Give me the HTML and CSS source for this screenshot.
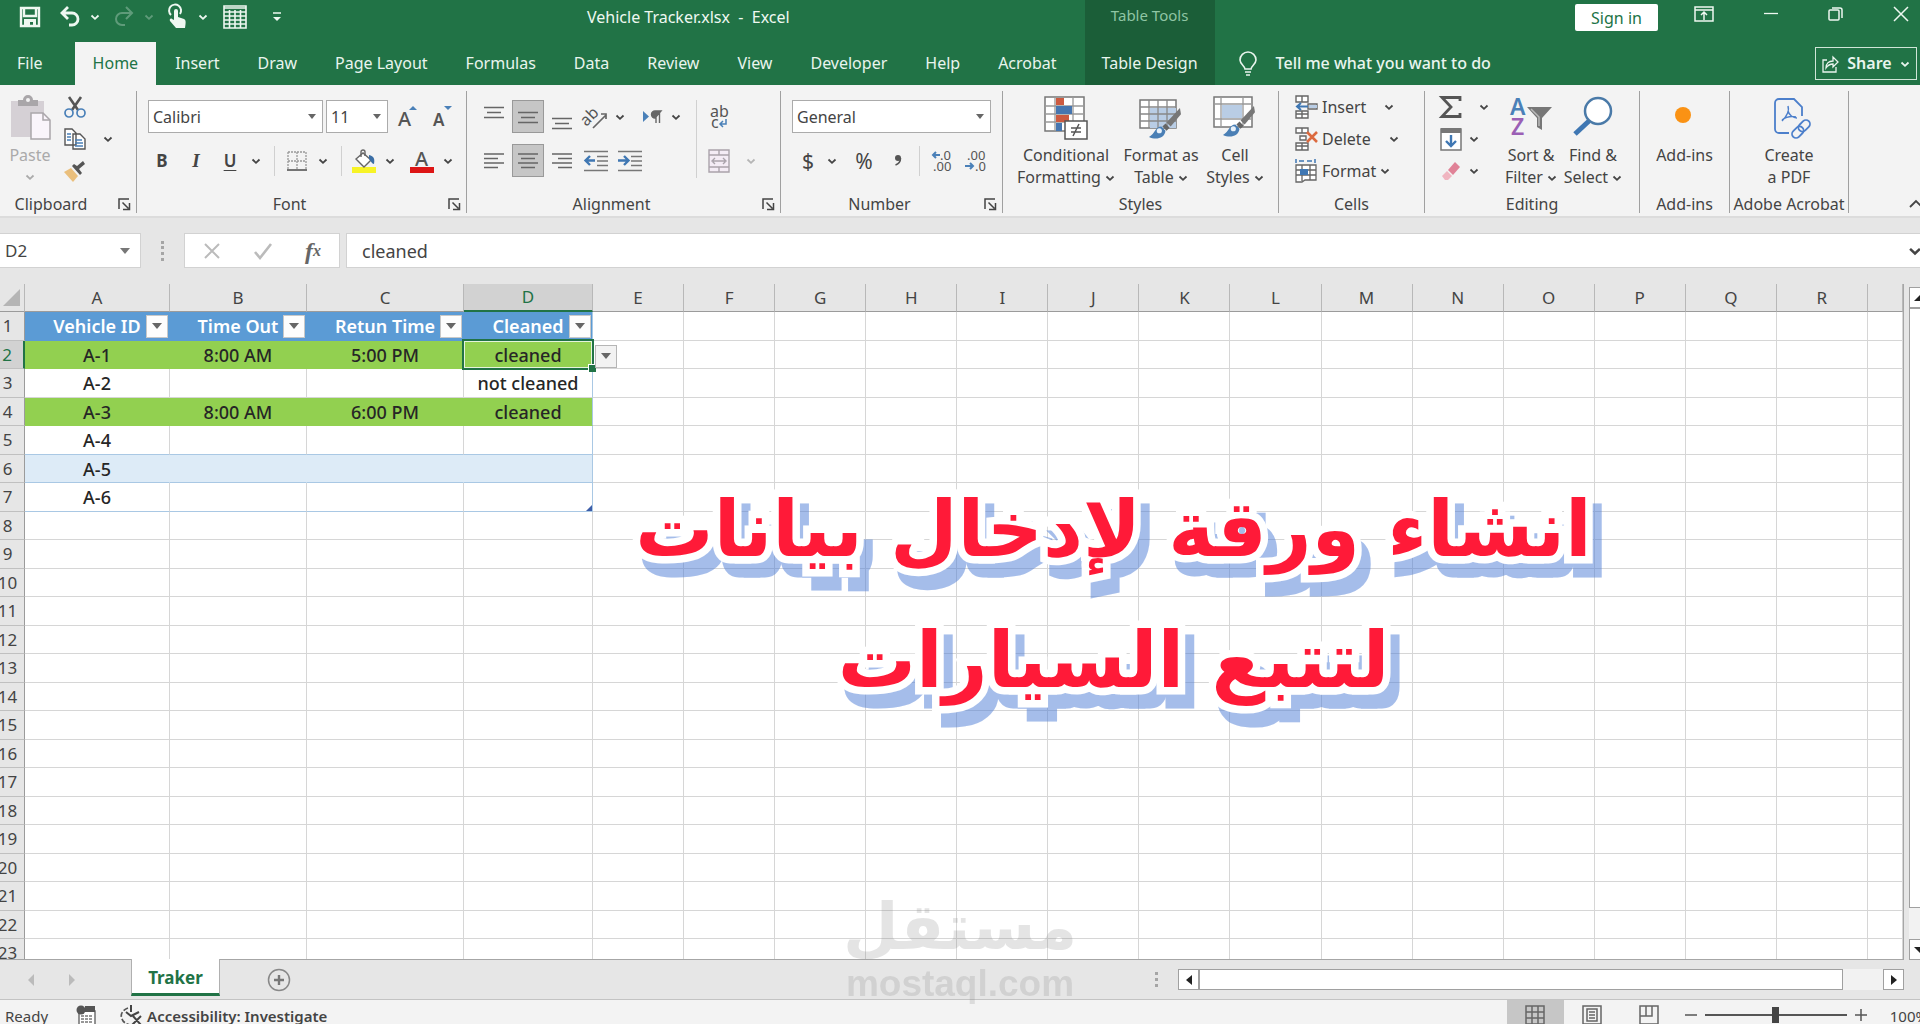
FILE: index.html
```html
<!DOCTYPE html>
<html lang="en">
<head>
    <meta charset="UTF-8">
    <meta name="viewport" content="width=device-width, initial-scale=1.0">
    <title>Vehicle Tracker.xlsx - Excel</title>
    <link rel="stylesheet" href="styles.css">
</head>
<body>
    <!-- shared small icons -->
    <svg class="sprite" aria-hidden="true">
        <symbol id="chev" viewBox="0 0 10 10"><path d="M1.5 3.5 5 6.8 8.5 3.5" fill="none" stroke="currentColor" stroke-width="1.8"/></symbol>
        <symbol id="launch" viewBox="0 0 13 13"><path d="M1 11V1h10M4.5 4.5l6 6M11.5 5v6.5H5" fill="none" stroke="currentColor" stroke-width="1.5"/></symbol>
        <symbol id="brush" viewBox="0 0 32 32"><path d="M30 1 17 15l4 4L31 7z" fill="#777"/><path d="m16 16-3 3 4 4 3-3z" fill="#666"/><path d="M12 19c-6 0-6 7-12 10 6 3 15 2 16-6z" fill="#4a7fb5"/><circle cx="10" cy="23" r="2.5" fill="#e8f1fa"/></symbol>
    </svg>

    <header class="titlebar">
        <div class="quick">
            <button type="button" aria-label="Save"><svg width="22" height="22" viewBox="0 0 22 22"><path d="M2 2h18v18H2zM5 2v8h12V2" fill="none" stroke="currentColor" stroke-width="2.4"/><path d="M5 13h12v7h-3v-4h-3v4H5z" fill="currentColor"/></svg></button>
            <button type="button" aria-label="Undo"><svg width="22" height="22" viewBox="0 0 22 22"><path d="M9 1 3 7l6 6M3 7h10a5.5 5.5 0 0 1 0 12h-3" fill="none" stroke="currentColor" stroke-width="2.8"/></svg></button>
            <button type="button" class="drop" aria-label="Undo list"><svg width="10" height="10"><use href="#chev"/></svg></button>
            <button type="button" class="off" aria-label="Redo"><svg width="22" height="22" viewBox="0 0 22 22"><path d="m13 1 6 6-6 6M19 7H9a5.5 5.5 0 0 0 0 12h3" fill="none" stroke="currentColor" stroke-width="2"/></svg></button>
            <button type="button" class="drop off" aria-label="Redo list"><svg width="10" height="10"><use href="#chev"/></svg></button>
            <button type="button" aria-label="Touch mode"><svg width="20" height="24" viewBox="0 0 20 24"><path d="M3 10a6 6 0 1 1 9-1" fill="none" stroke="currentColor" stroke-width="2"/><path d="M6 6a2 2 0 0 1 4 0v6l6 2c2 1 2 3 1 9H8l-6-7c-1-2 1-3 2-2l2 1z" fill="currentColor"/></svg></button>
            <button type="button" class="drop" aria-label="Touch mode list"><svg width="10" height="10"><use href="#chev"/></svg></button>
            <button type="button" class="qtable" aria-label="Table"><svg width="24" height="24" viewBox="0 0 24 24"><path d="M1 1h22v22H1zM1 7h22M1 11h22M1 15h22M1 19h22M6.5 5v18M12 5v18M17.5 5v18M1 3h22" fill="none" stroke="currentColor" stroke-width="1.6"/></svg></button>
            <button type="button" class="qmore" aria-label="Customize"><svg width="10" height="12" viewBox="0 0 10 12"><path d="M1 2h8" stroke="currentColor" stroke-width="1.5"/><path d="M1 6h8L5 10z" fill="currentColor"/></svg></button>
        </div>
        <div class="doc-title">Vehicle Tracker.xlsx&nbsp; -&nbsp; Excel</div>
        <div class="window-buttons">
            <button type="button" class="signin">Sign in</button>
            <button type="button" aria-label="Ribbon display options"><svg width="20" height="16" viewBox="0 0 20 16"><path d="M1 1h18v14H1zM1 4h18M10 14V6M7 9l3-3 3 3" fill="none" stroke="currentColor" stroke-width="1.5"/></svg></button>
            <button type="button" aria-label="Minimize"><svg width="16" height="16" viewBox="0 0 16 16"><path d="M1 7.5h14" stroke="currentColor" stroke-width="1.3"/></svg></button>
            <button type="button" aria-label="Restore"><svg width="16" height="16" viewBox="0 0 16 16"><path d="M1 5a1 1 0 0 1 1-1h8a1 1 0 0 1 1 1v8a1 1 0 0 1-1 1H2a1 1 0 0 1-1-1zM4 2h8a2 2 0 0 1 2 2v8" fill="none" stroke="currentColor" stroke-width="1.5"/></svg></button>
            <button type="button" aria-label="Close"><svg width="16" height="16" viewBox="0 0 16 16"><path d="m1 1 14 14M15 1 1 15" stroke="currentColor" stroke-width="1.5"/></svg></button>
        </div>
    </header>

    <nav class="tabs">
        <a href="#" class="file">File</a>
        <a href="#" class="active">Home</a>
        <a href="#">Insert</a>
        <a href="#">Draw</a>
        <a href="#">Page Layout</a>
        <a href="#">Formulas</a>
        <a href="#">Data</a>
        <a href="#">Review</a>
        <a href="#">View</a>
        <a href="#">Developer</a>
        <a href="#">Help</a>
        <a href="#">Acrobat</a>
        <div class="context">
            <span>Table Tools</span>
            <a href="#">Table Design</a>
        </div>
        <button type="button" class="tellme"><svg width="18" height="24" viewBox="0 0 18 24"><path d="M6 17c0-3-5-5-5-9a8 8 0 0 1 16 0c0 4-5 6-5 9zM6 20h6M7 23h4" fill="none" stroke="currentColor" stroke-width="1.6"/></svg>Tell me what you want to do</button>
        <button type="button" class="share"><svg width="17" height="18" viewBox="0 0 17 18"><path d="M5 5H1v12h13v-5M4 13c0-5 3-7 7-7V2l5 5-5 5V9c-3 0-5 1-7 4z" fill="none" stroke="currentColor" stroke-width="1.3"/></svg>Share<svg width="10" height="10"><use href="#chev"/></svg></button>
    </nav>

    <section class="ribbon">
        <div class="group g-clip">
            <div class="body">
                <button type="button" class="big paste">
                    <svg width="44" height="44" viewBox="0 0 44 44"><path d="M3 5h33v36H3z" fill="#d5d0d5"/><path d="M10 4h5a5 5 0 0 1 10 0h5v6H10z" fill="#a9a6a9"/><circle cx="20" cy="4" r="2" fill="#f3f3f3"/><path d="M23 17h12l7 7v19H23z" fill="#faf5fb" stroke="#aaa6aa" stroke-width="1.5"/><path d="M35 17v7h7" fill="none" stroke="#aaa6aa" stroke-width="1.5"/></svg>
                    <span>Paste</span><svg width="10" height="10"><use href="#chev"/></svg>
                </button>
                <div class="stack">
                    <button type="button" aria-label="Cut"><svg width="24" height="24" viewBox="0 0 24 24"><path d="M6 2l9 13M18 2 9 15" stroke="#555" stroke-width="2.6"/><circle cx="6" cy="18" r="4" fill="none" stroke="#4a80b8" stroke-width="1.7"/><circle cx="18" cy="18" r="4" fill="none" stroke="#4a80b8" stroke-width="1.7"/></svg></button>
                    <div class="line"><button type="button" aria-label="Copy"><svg width="24" height="24" viewBox="0 0 24 24"><path d="M2 2h7l4 4v12H2zM10 7h7l5 5v10H10z" fill="#fff" stroke="#555" stroke-width="1.4"/><path d="M4 7h4M4 10h4M4 13h4M12 13h7M12 16h8M12 19h8" stroke="#4a80b8" stroke-width="1.3"/></svg></button><button type="button" class="drop" aria-label="Copy options"><svg width="10" height="10"><use href="#chev"/></svg></button></div>
                    <button type="button" aria-label="Format Painter"><svg width="24" height="24" viewBox="0 0 24 24"><path d="m1 13 7-4 7 8-5 6z" fill="#eabf7c"/><path d="m9 7 8 9 2-2-3-4 6-5-2-3-6 5-3-2z" fill="#555"/></svg></button>
                </div>
            </div>
            <div class="caption"><span>Clipboard</span><button type="button" aria-label="Clipboard settings"><svg width="13" height="13"><use href="#launch"/></svg></button></div>
        </div>

        <div class="group g-font">
            <div class="body rows">
                <div class="line">
                    <select class="combo face" aria-label="Font"><option>Calibri</option></select>
                    <select class="combo size" aria-label="Font size"><option>11</option></select>
                    <button type="button" class="ico" aria-label="Increase font size"><svg width="18" height="24" viewBox="0 0 18 24"><text x="0" y="21" class="t20">A</text><path d="m11 5 4-4 4 4z" fill="#4a80b8"/></svg></button>
                    <button type="button" class="ico" aria-label="Decrease font size"><svg width="18" height="24" viewBox="0 0 18 24"><text x="1" y="21" class="t17">A</text><path d="m12 1 4 4 4-4z" fill="#4a80b8"/></svg></button>
                </div>
                <div class="line">
                    <button type="button" class="ico fmt"><b>B</b></button>
                    <button type="button" class="ico fmt"><i>I</i></button>
                    <button type="button" class="ico fmt"><u>U</u></button>
                    <button type="button" class="drop" aria-label="Underline options"><svg width="10" height="10"><use href="#chev"/></svg></button>
                    <span class="sep"></span>
                    <button type="button" class="ico" aria-label="Borders"><svg width="20" height="20" viewBox="0 0 20 20"><path d="M1 1h18v18M1 1v18M10 1v18M1 10h18" fill="none" stroke="#999" stroke-width="1.3" stroke-dasharray="2 1"/><path d="M0 19h20" stroke="#666" stroke-width="1.8"/></svg></button>
                    <button type="button" class="drop" aria-label="Border options"><svg width="10" height="10"><use href="#chev"/></svg></button>
                    <span class="sep"></span>
                    <button type="button" class="ico" aria-label="Fill color"><svg width="24" height="24" viewBox="0 0 24 24"><path d="M0 18h24v6H0z" fill="#f7f326"/><path d="m4 10 7-6 8 7-7 7z" fill="#fff" stroke="#666" stroke-width="1.4"/><path d="M9 8V3a2 2 0 0 1 4 0v4" fill="none" stroke="#666" stroke-width="1.4"/><path d="M17 6c5 1 6 4 5 9-2 0-3-3-5-5z" fill="#3b6ea5"/></svg></button>
                    <button type="button" class="drop" aria-label="Fill options"><svg width="10" height="10"><use href="#chev"/></svg></button>
                    <button type="button" class="ico push" aria-label="Font color"><svg width="24" height="24" viewBox="0 0 24 24"><path d="M0 18h24v6H0z" fill="#dd1515"/><text x="5" y="17" class="t20">A</text></svg></button>
                    <button type="button" class="drop" aria-label="Font color options"><svg width="10" height="10"><use href="#chev"/></svg></button>
                </div>
            </div>
            <div class="caption"><span>Font</span><button type="button" aria-label="Font settings"><svg width="13" height="13"><use href="#launch"/></svg></button></div>
        </div>

        <div class="group g-align">
            <div class="body">
                <div class="rows">
                    <div class="line">
                        <button type="button" class="ico" aria-label="Top align"><svg width="20" height="24" viewBox="0 0 20 24"><path d="M0 4.5h20M3 9.5h14M0 14.5h20" transform="translate(0 -2)" stroke="#666" stroke-width="1.5"/></svg></button>
                        <button type="button" class="ico on" aria-label="Middle align"><svg width="20" height="24" viewBox="0 0 20 24"><path d="M0 7.5h20M3 12.5h14M0 17.5h20" stroke="#666" stroke-width="1.5"/></svg></button>
                        <button type="button" class="ico" aria-label="Bottom align"><svg width="20" height="24" viewBox="0 0 20 24"><path d="M0 13.5h20M3 18.5h14M0 23.5h20" stroke="#666" stroke-width="1.5"/></svg></button>
                        <button type="button" class="ico" aria-label="Orientation"><svg width="24" height="24" viewBox="0 0 24 24"><text x="-3" y="15" class="t16" transform="rotate(-45 8 12)">ab</text><path d="M9 23 22 10M17 9h5v5" fill="none" stroke="#666" stroke-width="1.7"/></svg></button>
                        <button type="button" class="drop tight" aria-label="Orientation options"><svg width="10" height="10"><use href="#chev"/></svg></button>
                        <button type="button" class="ico push8" aria-label="Text direction"><svg width="20" height="18" viewBox="0 0 20 18"><path d="M1 3v11l6-5.5z" fill="#4a80b8"/><path d="M14 15V3M17.5 15V3M19 3h-6a3.5 3.5 0 0 0 0 7z" fill="#666" stroke="#666" stroke-width="1.4"/></svg></button>
                        <button type="button" class="drop tight" aria-label="Text direction options"><svg width="10" height="10"><use href="#chev"/></svg></button>
                    </div>
                    <div class="line">
                        <button type="button" class="ico" aria-label="Align left"><svg width="20" height="18" viewBox="0 0 20 18"><path d="M0 2h20M0 6.5h14M0 11h20M0 15.5h14" stroke="#666" stroke-width="1.5"/></svg></button>
                        <button type="button" class="ico on" aria-label="Center"><svg width="20" height="18" viewBox="0 0 20 18"><path d="M0 2h20M3 6.5h14M0 11h20M3 15.5h14" stroke="#666" stroke-width="1.5"/></svg></button>
                        <button type="button" class="ico" aria-label="Align right"><svg width="20" height="18" viewBox="0 0 20 18"><path d="M0 2h20M6 6.5h14M0 11h20M6 15.5h14" stroke="#666" stroke-width="1.5"/></svg></button>
                        <button type="button" class="ico" aria-label="Decrease indent"><svg width="24" height="22" viewBox="0 0 24 22"><path d="M0 1.5h24M13 6.5h11M13 11h11M13 15.5h11M0 20.5h24" stroke="#777" stroke-width="1.5"/><path d="M11 10.5H3M6 6l-4.5 4.5L6 15" fill="none" stroke="#3f77b3" stroke-width="2.4"/></svg></button>
                        <button type="button" class="ico" aria-label="Increase indent"><svg width="24" height="22" viewBox="0 0 24 22"><path d="M0 1.5h24M13 6.5h11M13 11h11M13 15.5h11M0 20.5h24" stroke="#777" stroke-width="1.5"/><path d="M0 10.5h9M6 6l4.5 4.5L6 15" fill="none" stroke="#3f77b3" stroke-width="2.4"/></svg></button>
                    </div>
                </div>
                <span class="sep tall"></span>
                <div class="rows">
                    <div class="line">
                        <button type="button" class="ico" aria-label="Wrap text"><svg width="18" height="26" viewBox="0 0 18 26"><text x="0" y="13" class="t16">ab</text><text x="1" y="24" class="t16">c</text><path d="M16 15v5h-5M13 17l-3 3 3 3" fill="none" stroke="#4a80b8" stroke-width="1.5"/></svg></button>
                    </div>
                    <div class="line">
                        <button type="button" class="ico" aria-label="Merge and center"><svg width="22" height="24" viewBox="0 0 22 24"><path d="M1 1h20v22H1zM1 6h20M1 18h20M11 1v5M11 18v5M5 12h12M7 9l-3 3 3 3M15 9l3 3-3 3" fill="#f4ecf5" stroke="#aaa3ab" stroke-width="1.4"/></svg></button>
                        <button type="button" class="drop faint push" aria-label="Merge options"><svg width="10" height="10"><use href="#chev"/></svg></button>
                    </div>
                </div>
            </div>
            <div class="caption"><span>Alignment</span><button type="button" aria-label="Alignment settings"><svg width="13" height="13"><use href="#launch"/></svg></button></div>
        </div>

        <div class="group g-number">
            <div class="body rows">
                <div class="line"><select class="combo format" aria-label="Number format"><option>General</option></select></div>
                <div class="line">
                    <button type="button" class="ico sym">$</button>
                    <button type="button" class="drop tight" aria-label="Currency options"><svg width="10" height="10"><use href="#chev"/></svg></button>
                    <button type="button" class="ico sym push8">%</button>
                    <button type="button" class="ico sym" aria-label="Comma style"><svg width="8" height="12" viewBox="0 0 8 12"><circle cx="4" cy="3" r="3" fill="#555"/><path d="M6.5 3c0 4-2 6-5 7" fill="none" stroke="#555" stroke-width="1.6"/></svg></button>
                    <span class="sep close"></span>
                    <button type="button" class="ico" aria-label="Increase decimal"><svg width="22" height="22" viewBox="0 0 22 22"><text x="9" y="10" class="t13">.0</text><text x="2" y="21" class="t13">.00</text><path d="M9 5H2M5 2 2 5l3 3" fill="none" stroke="#4a80b8" stroke-width="2"/></svg></button>
                    <button type="button" class="ico" aria-label="Decrease decimal"><svg width="22" height="22" viewBox="0 0 22 22"><text x="2" y="10" class="t13">.00</text><text x="10" y="21" class="t13">.0</text><path d="M0 16h8M5 13l3 3-3 3" fill="none" stroke="#4a80b8" stroke-width="2"/></svg></button>
                </div>
            </div>
            <div class="caption"><span>Number</span><button type="button" aria-label="Number settings"><svg width="13" height="13"><use href="#launch"/></svg></button></div>
        </div>

        <div class="group g-styles">
            <div class="body">
                <button type="button" class="big w102">
                    <svg width="44" height="44" viewBox="0 0 44 44"><path d="M1 1h39v34H1z" fill="#fff" stroke="#777" stroke-width="1.5"/><path d="M1 10h39M1 18h39M1 26h39M11 1v34M29 1v34" stroke="#999" stroke-width="1.3"/><path d="M12 2h8v7h-8zM12 19h13v7H12z" fill="#cc5a40"/><path d="M12 10h16v8H12zM12 27h6v8h-6z" fill="#4676b0"/><path d="M21 25h22v18H21z" fill="#fff" stroke="#555" stroke-width="1.5"/><path d="M27 32h10M27 36h10M35 28l-6 12" stroke="#555" stroke-width="1.5"/></svg>
                    <span>Conditional</span><span>Formatting <svg width="10" height="10"><use href="#chev"/></svg></span>
                </button>
                <button type="button" class="big w82">
                    <svg width="44" height="44" viewBox="0 0 44 44"><path d="M1 4h36v28H1z" fill="#fff" stroke="#777" stroke-width="1.5"/><path d="M11 12h26v20H11z" fill="#b9cde5"/><path d="M1 11h36M1 18h36M1 25h36M10 4v28M19 4v28M28 4v28" stroke="#888" stroke-width="1.3"/><svg x="10" y="11" width="33" height="33"><use href="#brush"/></svg></svg>
                    <span>Format as</span><span>Table <svg width="10" height="10"><use href="#chev"/></svg></span>
                </button>
                <button type="button" class="big w60">
                    <svg width="44" height="44" viewBox="0 0 44 44"><path d="M1 1h38v30H1z" fill="#fff" stroke="#777" stroke-width="1.5"/><path d="M9 9h20v13H9z" fill="#b9cde5"/><path d="M1 8h38M1 23h38M8 1v30M30 1v30" stroke="#999" stroke-width="1.3"/><svg x="10" y="9" width="33" height="33"><use href="#brush"/></svg></svg>
                    <span>Cell</span><span>Styles <svg width="10" height="10"><use href="#chev"/></svg></span>
                </button>
            </div>
            <div class="caption"><span>Styles</span></div>
        </div>

        <div class="group g-cells">
            <div class="body stack">
                <button type="button" class="side"><svg width="23" height="24" viewBox="0 0 23 24"><path d="M1 1h12v6H1zM1 16h12v7H1zM7 1v6M7 16v7M1 19h12M13 9h9v5h-9z" fill="#fff" stroke="#666" stroke-width="1.4"/><path d="M14 10h8v3h-8z" fill="#b9cde5"/><path d="M13 11.5H2M6 8l-4 3.5L6 15" fill="none" stroke="#3f77b3" stroke-width="2"/></svg>Insert<svg class="far" width="10" height="10"><use href="#chev"/></svg></button>
                <button type="button" class="side"><svg width="23" height="24" viewBox="0 0 23 24"><path d="M1 1h12v5H1zM1 16h12v7H1zM7 1v5M7 16v7M1 19h12M5 9h6v4H5z" fill="#fff" stroke="#666" stroke-width="1.4"/><path d="m12 5 10 10M22 5 12 15" stroke="#dc6a3f" stroke-width="2.6"/></svg>Delete<svg class="far" width="10" height="10"><use href="#chev"/></svg></button>
                <button type="button" class="side"><svg width="23" height="24" viewBox="0 0 23 24"><path d="M1 6h20v15H10l-3 2H1zM1 11h20M1 16h20M7 6v16M15 6v15" fill="#fff" stroke="#666" stroke-width="1.3"/><path d="M5 10h8v6H5z" fill="#3f77b3"/><path d="M1 0v4M20 0v4M4 2h5M12 2h5" stroke="#3f77b3" stroke-width="1.5"/></svg>Format<svg width="10" height="10"><use href="#chev"/></svg></button>
            </div>
            <div class="caption"><span>Cells</span></div>
        </div>

        <div class="group g-edit">
            <div class="body">
                <div class="stack">
                    <div class="line wide"><button type="button" aria-label="AutoSum"><svg width="24" height="24" viewBox="0 0 24 24"><path d="M21 6V2.5H3l9 9.500-9 9.500h18V18" fill="none" stroke="#555" stroke-width="2.8"/></svg></button><button type="button" class="drop" aria-label="AutoSum options"><svg width="10" height="10"><use href="#chev"/></svg></button></div>
                    <div class="line"><button type="button" aria-label="Fill"><svg width="24" height="24" viewBox="0 0 24 24"><path d="M2 2h20v21H2z" fill="#fff" stroke="#777" stroke-width="1.5"/><path d="M2 1h20v5H2z" fill="#777"/><path d="M12 8v11M7 14l5 5 5-5" fill="none" stroke="#3f77b3" stroke-width="2.4"/></svg></button><button type="button" class="drop" aria-label="Fill options"><svg width="10" height="10"><use href="#chev"/></svg></button></div>
                    <div class="line"><button type="button" aria-label="Clear"><svg width="24" height="24" viewBox="0 0 24 24"><path d="m9 11 7-8 5 5-7 8z" fill="#e08297"/><path d="m8 12 5 5-4 4H6l-3-4z" fill="#f0b5c0"/></svg></button><button type="button" class="drop" aria-label="Clear options"><svg width="10" height="10"><use href="#chev"/></svg></button></div>
                </div>
                <button type="button" class="big w60">
                    <svg width="44" height="44" viewBox="0 0 44 44"><text x="1" y="19" class="az blue">A</text><text x="2" y="39" class="az purple">Z</text><path d="M18 11h25L33 22v12l-5-3v-9z" fill="#777"/><path d="m22 13 8 8v9" fill="none" stroke="#bbb" stroke-width="1.5"/></svg>
                    <span>Sort &amp;</span><span>Filter <svg width="10" height="10"><use href="#chev"/></svg></span>
                </button>
                <button type="button" class="big w60">
                    <svg width="44" height="44" viewBox="0 0 44 44"><path d="M4 38 18 25" stroke="#3f77b3" stroke-width="5"/><circle cx="27" cy="15" r="13" fill="#fff" stroke="#4a7aa8" stroke-width="2.5"/></svg>
                    <span>Find &amp;</span><span>Select <svg width="10" height="10"><use href="#chev"/></svg></span>
                </button>
            </div>
            <div class="caption"><span>Editing</span></div>
        </div>

        <div class="group g-addins">
            <div class="body">
                <button type="button" class="big"><svg width="44" height="44" viewBox="0 0 44 44"><circle cx="20" cy="19" r="8" fill="#fa9214"/></svg><span>Add-ins</span></button>
            </div>
            <div class="caption"><span>Add-ins</span></div>
        </div>

        <div class="group g-acrobat">
            <div class="body">
                <button type="button" class="big">
                    <svg width="44" height="44" viewBox="0 0 44 44" fill="none" stroke="#4c7fcb" stroke-width="1.8"><path d="M22 37H12a4 4 0 0 1-4-4V7a4 4 0 0 1 4-4h15l8 8v9"/><path d="M21 10c2 6-2 11-6 15M21 15c1 4 5 7 9 7M15 24c4-3 9-4 14-3" stroke-width="1.5"/><g transform="rotate(-45 34 33)"><rect x="23" y="29" width="13" height="8" rx="4"/><rect x="32" y="29" width="13" height="8" rx="4"/></g></svg>
                    <span>Create</span><span>a PDF</span>
                </button>
            </div>
            <div class="caption"><span>Adobe Acrobat</span></div>
        </div>
        <button type="button" class="collapse" aria-label="Collapse ribbon"><svg width="16" height="10" viewBox="0 0 16 10"><path d="m2 8 6-6 6 6" fill="none" stroke="currentColor" stroke-width="1.8"/></svg></button>
    </section>

    <section class="formula">
        <div class="namebox"><input type="text" value="D2" aria-label="Name box"><svg width="12" height="8" viewBox="0 0 12 8"><path d="M1 1h10L6 7z" fill="#777"/></svg></div>
        <span class="dots"></span>
        <div class="fxbox">
            <button type="button" aria-label="Cancel"><svg width="18" height="18" viewBox="0 0 18 18"><path d="m2 2 14 14M16 2 2 16" stroke="#bbb" stroke-width="2"/></svg></button>
            <button type="button" aria-label="Enter"><svg width="20" height="18" viewBox="0 0 20 18"><path d="m2 10 5 6L18 2" fill="none" stroke="#bbb" stroke-width="2.6"/></svg></button>
            <button type="button" class="fx">f<sub>x</sub></button>
        </div>
        <div class="bar"><input type="text" value="cleaned" aria-label="Formula bar"><button type="button" aria-label="Expand formula bar"><svg width="14" height="14"><use href="#chev"/></svg></button></div>
    </section>

    <main class="workspace">
        <div class="pane">
            <table class="sheet">
                <colgroup><col class="c-head"><col class="c-a"><col class="c-b"><col class="c-c"><col class="c-d"></colgroup>
                <thead></thead>
                <tbody></tbody>
            </table>
        </div>
        <div class="vscroll">
            <button type="button" aria-label="Scroll up"><svg width="12" height="8" viewBox="0 0 12 8"><path d="M0 7h12L6 1z" fill="#222"/></svg></button>
            <div class="thumb"></div>
            <div class="track"></div>
            <button type="button" aria-label="Scroll down"><svg width="12" height="8" viewBox="0 0 12 8"><path d="M0 1h12L6 7z" fill="#222"/></svg></button>
        </div>
        <h1 class="headline" lang="ar" dir="rtl">انشاء ورقة لإدخال بيانات<br>لتتبع السيارات</h1>
    </main>

    <div class="sheetbar">
        <button type="button" class="nav" aria-label="Previous sheet"><svg width="8" height="12" viewBox="0 0 8 12"><path d="M7 0v12L1 6z" fill="#bbb"/></svg></button>
        <button type="button" class="nav" aria-label="Next sheet"><svg width="8" height="12" viewBox="0 0 8 12"><path d="M1 0v12l6-6z" fill="#bbb"/></svg></button>
        <a href="#" class="sheet-tab">Traker</a>
        <button type="button" class="add" aria-label="New sheet"><svg width="24" height="24" viewBox="0 0 24 24"><circle cx="12" cy="12" r="10.5" fill="none" stroke="#888" stroke-width="1.5"/><path d="M12 7v10M7 12h10" stroke="#777" stroke-width="2.4"/></svg></button>
        <div class="hscroll">
            <span class="dots"></span>
            <button type="button" aria-label="Scroll left"><svg width="8" height="12" viewBox="0 0 8 12"><path d="M7 1v10L1 6z" fill="#222"/></svg></button>
            <div class="thumb"></div>
            <div class="track"></div>
            <button type="button" aria-label="Scroll right"><svg width="8" height="12" viewBox="0 0 8 12"><path d="M1 1v10l6-5z" fill="#222"/></svg></button>
        </div>
        <div class="watermark"><span lang="ar">مستقل</span><span class="site">mostaql.com</span></div>
    </div>

    <footer class="status">
        <span class="ready">Ready</span>
        <svg class="macro" width="20" height="22" viewBox="0 0 20 22"><path d="M3 6h16v15H3z" fill="#fff" stroke="#666" stroke-width="1.4"/><path d="M9 1h10v6H9z" fill="#555"/><path d="M5 11h12M5 14h12M5 17h12" stroke="#777" stroke-width="1.5" stroke-dasharray="3 1"/><circle cx="5" cy="5" r="4.5" fill="#555"/></svg>
        <button type="button" class="access"><svg width="24" height="24" viewBox="0 0 24 24"><path d="M9 4C3 6 1 11 3 15c1 3 4 5 8 6" fill="none" stroke="#555" stroke-width="1.7" stroke-dasharray="5 2"/><path d="M12 1v7M7 8l5 4 8-4M14 12l8 9M22 12l-9 9" fill="none" stroke="#444" stroke-width="2"/></svg>Accessibility: Investigate</button>
        <div class="views">
            <button type="button" class="on" aria-label="Normal view"><svg width="20" height="20" viewBox="0 0 20 20"><path d="M1 1h18v18H1zM1 7h18M1 13h18M7 1v18M13 1v18" fill="none" stroke="#666" stroke-width="1.5"/></svg></button>
            <button type="button" aria-label="Page layout view"><svg width="20" height="20" viewBox="0 0 20 20"><path d="M1 1h18v18H1zM5 4h10v12H5zM7 7h6M7 10h6M7 13h6" fill="none" stroke="#666" stroke-width="1.5"/></svg></button>
            <button type="button" aria-label="Page break view"><svg width="20" height="20" viewBox="0 0 20 20"><path d="M1 1h18v18H1zM1 11h12V1M7 1v10" fill="none" stroke="#666" stroke-width="1.5"/></svg></button>
            <button type="button" class="zoom" aria-label="Zoom out"><svg width="12" height="12" viewBox="0 0 12 12"><path d="M0 6h12" stroke="#555" stroke-width="1.5"/></svg></button>
            <input type="range" min="0" max="100" value="50" aria-label="Zoom">
            <button type="button" class="zoom" aria-label="Zoom in"><svg width="12" height="12" viewBox="0 0 12 12"><path d="M0 6h12M6 0v12" stroke="#555" stroke-width="1.5"/></svg></button>
            <span class="percent">100%</span>
        </div>
    </footer>
    <script src="script.js"></script>
</body>
</html>
```
FILE: styles.css
```css
* {
    box-sizing: border-box;
}
body {
    font-family: "Noto Sans", "Open Sans", sans-serif;
    font-size: 16px;
    color: #444;
    background-color: #e6e6e6;
    margin: 0;
    height: 100vh;
    display: flex;
    flex-direction: column;
    overflow: hidden;
}
button, input, select {
    font: inherit;
    color: inherit;
    margin: 0;
}
button {
    background: none;
    border: 0;
    padding: 0;
    display: flex;
    align-items: center;
    justify-content: center;
    white-space: nowrap;
}
a {
    color: inherit;
    text-decoration: none;
}
svg {
    flex: none;
    overflow: visible;
}
.sprite {
    display: none;
}

/* title bar */
.titlebar {
    background-color: #217346;
    color: #eef8f1;
    height: 42px;
    display: flex;
    align-items: flex-start;
    flex: none;
}
.quick {
    display: flex;
    align-items: center;
    height: 34px;
    padding-left: 14px;
    width: 587px;
}
.quick button {
    width: 32px;
    margin-right: 8px;
}
.quick .drop {
    width: 14px;
    margin: 0 6px 0 -6px;
}
.quick .off {
    opacity: 0.3;
}
.quick .qtable {
    margin-left: 3px;
}
.quick .qmore {
    width: 36px;
}
.doc-title {
    line-height: 34px;
}
.window-buttons {
    margin-left: auto;
    display: flex;
    align-items: center;
    gap: 49px;
    height: 28px;
    padding-right: 11px;
}
.window-buttons .signin {
    background-color: #fff;
    color: #217346;
    width: 83px;
    height: 27px;
    border-radius: 2px;
    margin: 7px -13px 0 0;
}

/* ribbon tabs */
.tabs {
    background-color: #217346;
    color: #e9f5ee;
    height: 43px;
    display: flex;
    flex: none;
    line-height: 43px;
}
.tabs > a {
    padding: 0 19px;
}
.tabs > .file {
    padding: 0 32px 0 17px;
}
.tabs > .active {
    background-color: #f3f3f3;
    color: #217346;
    padding: 0 18px;
}
.context {
    background-color: #1b5e38;
    display: flex;
    flex-direction: column;
    margin: -42px 0 0 9px;
    padding: 0 17px;
    text-align: center;
}
.context span {
    line-height: 30px;
    height: 42px;
    font-size: 15px;
    color: #8fc5a4;
}
.tellme {
    gap: 19px;
    margin-left: 24px;
    font-weight: 500;
}
.share {
    margin: 5px 3px 5px auto;
    height: 33px;
    width: 102px;
    border: 1px solid #cfe5d7;
    gap: 8px;
    font-weight: 600;
}

/* ribbon */
.ribbon {
    background-color: #f3f3f3;
    border-bottom: 2px solid #dcdcdc;
    display: flex;
    flex: none;
    padding: 6px 0 3px;
}
.group {
    border-right: 1px solid #a0a0a0;
    display: flex;
    flex-direction: column;
}
.body {
    display: flex;
    height: 104px;
}
.caption {
    display: flex;
    line-height: 18px;
    white-space: nowrap;
}
.caption span {
    flex: 1;
    text-align: center;
}
.caption button {
    width: 24px;
}
.rows {
    display: flex;
    flex-direction: column;
    gap: 11px;
    padding-top: 9px;
}
.line {
    display: flex;
    align-items: center;
}
.rows .line {
    height: 33px;
}
.ico {
    width: 32px;
    height: 33px;
    margin: 0 1px;
}
.ico.on {
    background-color: #c6c6c6;
    border: 1px solid #999;
}
.ico.push {
    margin-left: 7px;
}
.push8 {
    margin-left: 9px;
}
.drop {
    width: 18px;
    height: 24px;
}
.drop.tight {
    width: 14px;
}
.drop.faint {
    color: #b5b5b5;
}
.drop.push {
    margin-left: 6px;
}
.fmt {
    font-size: 17px;
}
.fmt i {
    font-family: "Liberation Serif", serif;
    font-weight: bold;
    font-size: 19px;
}
.fmt u {
    font-weight: 600;
    text-underline-offset: 3px;
}
.sym {
    font-size: 21px;
}
.sep {
    width: 1px;
    height: 30px;
    background-color: #d0d0d0;
    margin: 0 5px 0 9px;
}
.sep.close {
    margin-left: 4px;
}
.sep.tall {
    height: 78px;
    margin: 9px 5px 0 13px;
}
.combo {
    appearance: none;
    height: 33px;
    border: 1px solid #ababab;
    border-radius: 0;
    padding: 0 4px;
    background: #fff url("data:image/svg+xml,%3Csvg xmlns='http://www.w3.org/2000/svg' width='8' height='5'%3E%3Cpath d='M0 0h8L4 5z' fill='%23666'/%3E%3C/svg%3E") no-repeat right 6px center;
}
.combo.face {
    width: 175px;
    margin: 0 3px;
}
.combo.size {
    width: 62px;
    margin-right: 2px;
}
.combo.format {
    width: 199px;
    margin-left: 1px;
}
.stack {
    display: flex;
    flex-direction: column;
    align-items: flex-start;
}
.stack > * {
    height: 32px;
}
.big {
    flex-direction: column;
    justify-content: flex-start;
    padding-top: 5px;
    line-height: 22px;
}
.big > svg:first-child {
    margin-bottom: 4px;
}
.w102 {
    width: 102px;
}
.w82 {
    width: 82px;
}
.w60 {
    width: 60px;
}
.side {
    gap: 4px;
}
.side .far {
    margin-left: 14px;
}
.g-clip {
    width: 137px;
}
.g-clip .body {
    padding-left: 8px;
    gap: 11px;
}
.g-clip .drop {
    margin-left: 12px;
}
.g-clip .caption span {
    padding-right: 10px;
}
.paste {
    color: #aaa;
}
.paste > svg:last-child {
    margin-top: 6px;
}
.g-font {
    width: 330px;
}
.g-font .body {
    padding-left: 8px;
}
.g-align {
    width: 314px;
}
.g-align .body {
    padding-left: 10px;
}
.g-number {
    width: 222px;
}
.g-number .body {
    padding-left: 10px;
}
.g-styles {
    width: 276px;
}
.g-styles .body {
    padding-left: 12px;
    gap: 3px;
}
.g-cells {
    width: 146px;
}
.g-cells .body {
    padding-left: 16px;
}
.g-edit {
    width: 215px;
}
.g-edit .body {
    padding-left: 14px;
    gap: 2px;
}
.g-edit .stack {
    width: 60px;
}
.g-edit .drop {
    margin-left: 2px;
}
.g-edit .wide .drop {
    margin-left: 12px;
}
.g-addins {
    width: 90px;
}
.g-acrobat {
    width: 119px;
}
.g-addins .body, .g-acrobat .body {
    justify-content: center;
}
.collapse {
    margin: auto -4px 4px auto;
}
.t13, .t16, .t17, .t20 {
    fill: #555;
    font-size: 13px;
}
.t16 {
    font-size: 16px;
}
.t17 {
    font-size: 17px;
    font-weight: 600;
}
.t20 {
    font-size: 20px;
    font-weight: 500;
}
.az {
    font-size: 23px;
    font-weight: 600;
}
.blue {
    fill: #4a80b8;
}
.purple {
    fill: #9b5fb5;
}

/* formula bar */
.formula {
    display: flex;
    flex: none;
    height: 66px;
    padding: 15px 0 16px;
}
.formula input {
    border: 0;
    background: none;
    padding: 0;
    min-width: 0;
    flex: 1;
    outline: 0;
}
.namebox, .fxbox, .bar {
    background-color: #fff;
    border: 1px solid #d2d2d2;
    display: flex;
    align-items: center;
}
.namebox {
    width: 141px;
    border-left: 0;
    padding: 0 9px 0 5px;
    font-size: 17px;
}
.dots {
    width: 3px;
    height: 20px;
    border-left: 3px dotted #a5a5a5;
    margin: auto 20px;
}
.fxbox {
    width: 156px;
    justify-content: space-around;
    padding: 0 2px;
}
.fx {
    font-family: "Liberation Serif", serif;
    font-style: italic;
    font-weight: bold;
    font-size: 24px;
    line-height: 24px;
    color: #666;
}
.fx sub {
    font-size: 16px;
}
.bar {
    flex: 1;
    margin-left: 6px;
    border-right: 0;
    padding-left: 15px;
    font-size: 18px;
}
.bar button {
    margin-right: -2px;
}

/* sheet */
.workspace {
    position: relative;
    flex: 1;
    min-height: 0;
    display: flex;
}
.pane {
    flex: 1;
    overflow: hidden;
    border-right: 1px solid #a6a6a6;
    border-bottom: 1px solid #a6a6a6;
}
/* the row headings start a little outside the window */
.sheet {
    width: calc(100% + 9px);
    margin-left: -9px;
    table-layout: fixed;
    border-collapse: separate;
    border-spacing: 0;
    font-size: 18px;
    line-height: 20px;
    color: #262626;
}
.c-head {
    width: 34px;
}
.c-a {
    width: 145px;
}
.c-b {
    width: 137px;
}
.c-c {
    width: 157px;
}
.c-d {
    width: 129px;
}
.sheet .last {
    width: 35px;
}
.sheet th, .sheet td {
    padding: 0;
    text-align: center;
    white-space: nowrap;
}
.sheet thead th {
    height: 28px;
    border-right: 1px solid #b8b8b8;
    border-bottom: 1px solid #9b9b9b;
    font-weight: normal;
    font-size: 17px;
    color: #444;
}
.sheet thead .picked {
    background-color: #d2d2d2;
    border-bottom: 2px solid #217346;
    color: #217346;
}
.sheet .corner svg {
    display: block;
    margin-left: 12px;
}
.sheet tbody tr {
    height: 28px;
}
.sheet tbody tr:nth-child(odd) {
    height: 29px;
}
.sheet tbody th {
    background-color: #e6e6e6;
    border-right: 1px solid #9b9b9b;
    border-bottom: 1px solid #c0c0c0;
    font-weight: normal;
    font-size: 17px;
    color: #444;
}
.sheet tbody th.picked {
    background-color: #d2d2d2;
    border-right: 2px solid #217346;
    color: #217346;
}
.sheet td {
    position: relative;
    background-color: #fff;
    border-right: 1px solid #d6d6d6;
    border-bottom: 1px solid #d6d6d6;
    font-weight: 500;
}
.sheet .titles td.in {
    background-color: #5b9bd5;
    border-color: #5b9bd5;
    color: #fff;
    font-weight: 600;
}
.sheet .done td.in {
    background-color: #92d050;
    border-color: #92d050;
}
.sheet .band td.in {
    background-color: #ddebf7;
    border-color: #ddebf7;
    border-bottom-color: #a9c8e4;
}
.sheet .above td.in, .sheet .end td.in {
    border-bottom-color: #a9c8e4;
}
.sheet tr td.in:nth-child(5) {
    border-right-color: #a9c8e4;
}
.filter, .pick {
    position: absolute;
    top: 3px;
    right: 1px;
    width: 22px;
    height: 23px;
    background-color: #fdfdfd;
    border: 1px solid #c8c8c8;
}
.pick {
    top: 4px;
    right: -25px;
    background-color: #f2f2f2;
    border-color: #b5b5b5;
    z-index: 2;
}
.cursor {
    position: absolute;
    inset: -2px;
    border: 2px solid #217346;
    box-shadow: inset 0 0 0 1px #e5f3dc;
    z-index: 1;
}
.cursor::after {
    content: "";
    position: absolute;
    right: -4px;
    bottom: -4px;
    width: 7px;
    height: 7px;
    background-color: #217346;
    border: 1px solid #fff;
    border-width: 1px 0 0 1px;
}
.end .corner-mark {
    position: absolute;
    right: 0;
    bottom: 0;
    border: 3px solid #3c5da8;
    border-top-color: transparent;
    border-left-color: transparent;
}
.vscroll {
    width: 16px;
    overflow: hidden;
    display: flex;
    flex-direction: column;
    padding: 3px 0 0 5px;
}
.vscroll button, .vscroll .thumb {
    width: 21px;
    height: 21px;
    flex: none;
    background-color: #fff;
    border: 1px solid #a0a0a0;
}
.vscroll .thumb {
    flex: 601;
}
.vscroll .track {
    flex: 31;
    background-color: #f2f2f2;
}
.headline {
    position: absolute;
    left: 58%;
    top: 180px;
    transform: translateX(-50%);
    margin: 0;
    font-family: "DejaVu Sans", sans-serif;
    font-weight: bold;
    font-size: 78px;
    line-height: 131px;
    text-align: center;
    white-space: nowrap;
    color: #ff1a38;
    -webkit-text-stroke: 15px #fff;
    paint-order: stroke fill;
    stroke-linejoin: round;
    filter: drop-shadow(9px 14px 0 rgba(76, 124, 214, 0.5));
    z-index: 3;
}

/* sheet tabs */
.sheetbar {
    position: relative;
    display: flex;
    align-items: center;
    flex: none;
    height: 40px;
    padding-left: 10px;
    border-bottom: 1px solid #c3c3c3;
}
.nav {
    width: 41px;
}
.sheet-tab {
    position: relative;
    align-self: flex-start;
    margin: -1px 0 0 39px;
    padding-top: 4px;
    width: 89px;
    line-height: 30px;
    text-align: center;
    background-color: #fff;
    border: 1px solid #b0b0b0;
    border-top: 0;
    border-bottom: 3px solid #217346;
    color: #217346;
    font-size: 17px;
    font-weight: 700;
}
.add {
    margin-left: 47px;
}
.hscroll {
    display: flex;
    width: calc(40% + 5px);
    margin: 0 16px 0 auto;
    height: 21px;
}
.hscroll .dots {
    height: 15px;
}
.hscroll button {
    width: 21px;
    background-color: #fff;
    border: 1px solid #a0a0a0;
}
.hscroll .thumb {
    flex: 643;
    background-color: #fff;
    border: 1px solid #a0a0a0;
}
.hscroll .track {
    flex: 40;
    background-color: #f2f2f2;
}
.watermark {
    position: absolute;
    left: 50%;
    bottom: -6px;
    transform: translateX(-50%);
    display: flex;
    flex-direction: column;
    align-items: center;
    font-family: "DejaVu Sans", sans-serif;
    font-weight: bold;
    font-size: 64px;
    line-height: 72px;
    opacity: 0.22;
    color: #888;
    z-index: 3;
}
.watermark .site {
    font-family: "Liberation Sans", sans-serif;
    font-size: 37px;
    line-height: 42px;
}

/* status bar */
.status {
    flex: none;
    height: 24px;
    overflow: hidden;
    background-color: #f3f3f3;
    display: flex;
    align-items: flex-start;
    line-height: 32px;
    font-size: 15px;
    padding-left: 5px;
}
.macro {
    margin: 5px 0 0 28px;
}
.access {
    margin-left: 23px;
    gap: 4px;
    font-weight: 600;
    line-height: 32px;
}
.views {
    display: flex;
    margin-left: auto;
    margin-right: -8px;
}
.views button {
    width: 57px;
    height: 30px;
}
.views .on {
    background-color: #c6c6c6;
}
.views .zoom {
    width: 18px;
}
.views button + .zoom {
    margin-left: 4px;
}
.views input {
    appearance: none;
    width: 142px;
    height: 30px;
    margin: 0 5px;
    background: linear-gradient(#555, #555) center / 100% 2px no-repeat;
}
.views input::-webkit-slider-thumb {
    appearance: none;
    width: 7px;
    height: 16px;
    background-color: #444;
}
.percent {
    margin-left: 20px;
}
```
FILE: script.js
```js
const letters = "ABCDEFGHIJKLMNOPQR".split("");
const arrow = '<svg width="10" height="7" viewBox="0 0 10 7"><path d="M0 0h10L5 6z" fill="#666"/></svg>';

const rows = [
    { type: "titles", cells: ["Vehicle ID", "Time Out", "Retun Time", "Cleaned"] },
    { type: "done", cells: ["A-1", "8:00 AM", "5:00 PM", "cleaned"] },
    { type: "", cells: ["A-2", "", "", "not cleaned"] },
    { type: "done", cells: ["A-3", "8:00 AM", "6:00 PM", "cleaned"] },
    { type: "above", cells: ["A-4", "", "", ""] },
    { type: "band", cells: ["A-5", "", "", ""] },
    { type: "end", cells: ["A-6", "", "", ""] }
];

let head = '<tr><th class="corner"><svg width="17" height="17"><path d="M17 0v17H0z" fill="#b5b5b5"/></svg></th>';
letters.forEach(letter => {
    head += `<th${letter === "D" ? ' class="picked"' : ""}>${letter}</th>`;
});
head += '<th class="last"></th></tr>';
document.querySelector(".sheet thead").innerHTML = head;

let body = "";
for (let r = 1; r <= 23; r++) {
    const row = rows[r - 1];
    body += `<tr class="${row ? row.type : ""}"><th${r === 2 ? ' class="picked"' : ""}>${r}</th>`;
    for (let c = 0; c <= letters.length; c++) {
        if (!row || c > 3) {
            body += "<td></td>";
            continue;
        }
        let extra = "";
        if (r === 1) extra = `<button type="button" class="filter" aria-label="Filter">${arrow}</button>`;
        if (r === 2 && c === 3) extra = `<span class="cursor"></span><button type="button" class="pick" aria-label="Choose value">${arrow}</button>`;
        if (r === 7 && c === 3) extra = '<span class="corner-mark"></span>';
        body += `<td class="in">${row.cells[c]}${extra}</td>`;
    }
    body += "</tr>";
}
document.querySelector(".sheet tbody").innerHTML = body;
```
